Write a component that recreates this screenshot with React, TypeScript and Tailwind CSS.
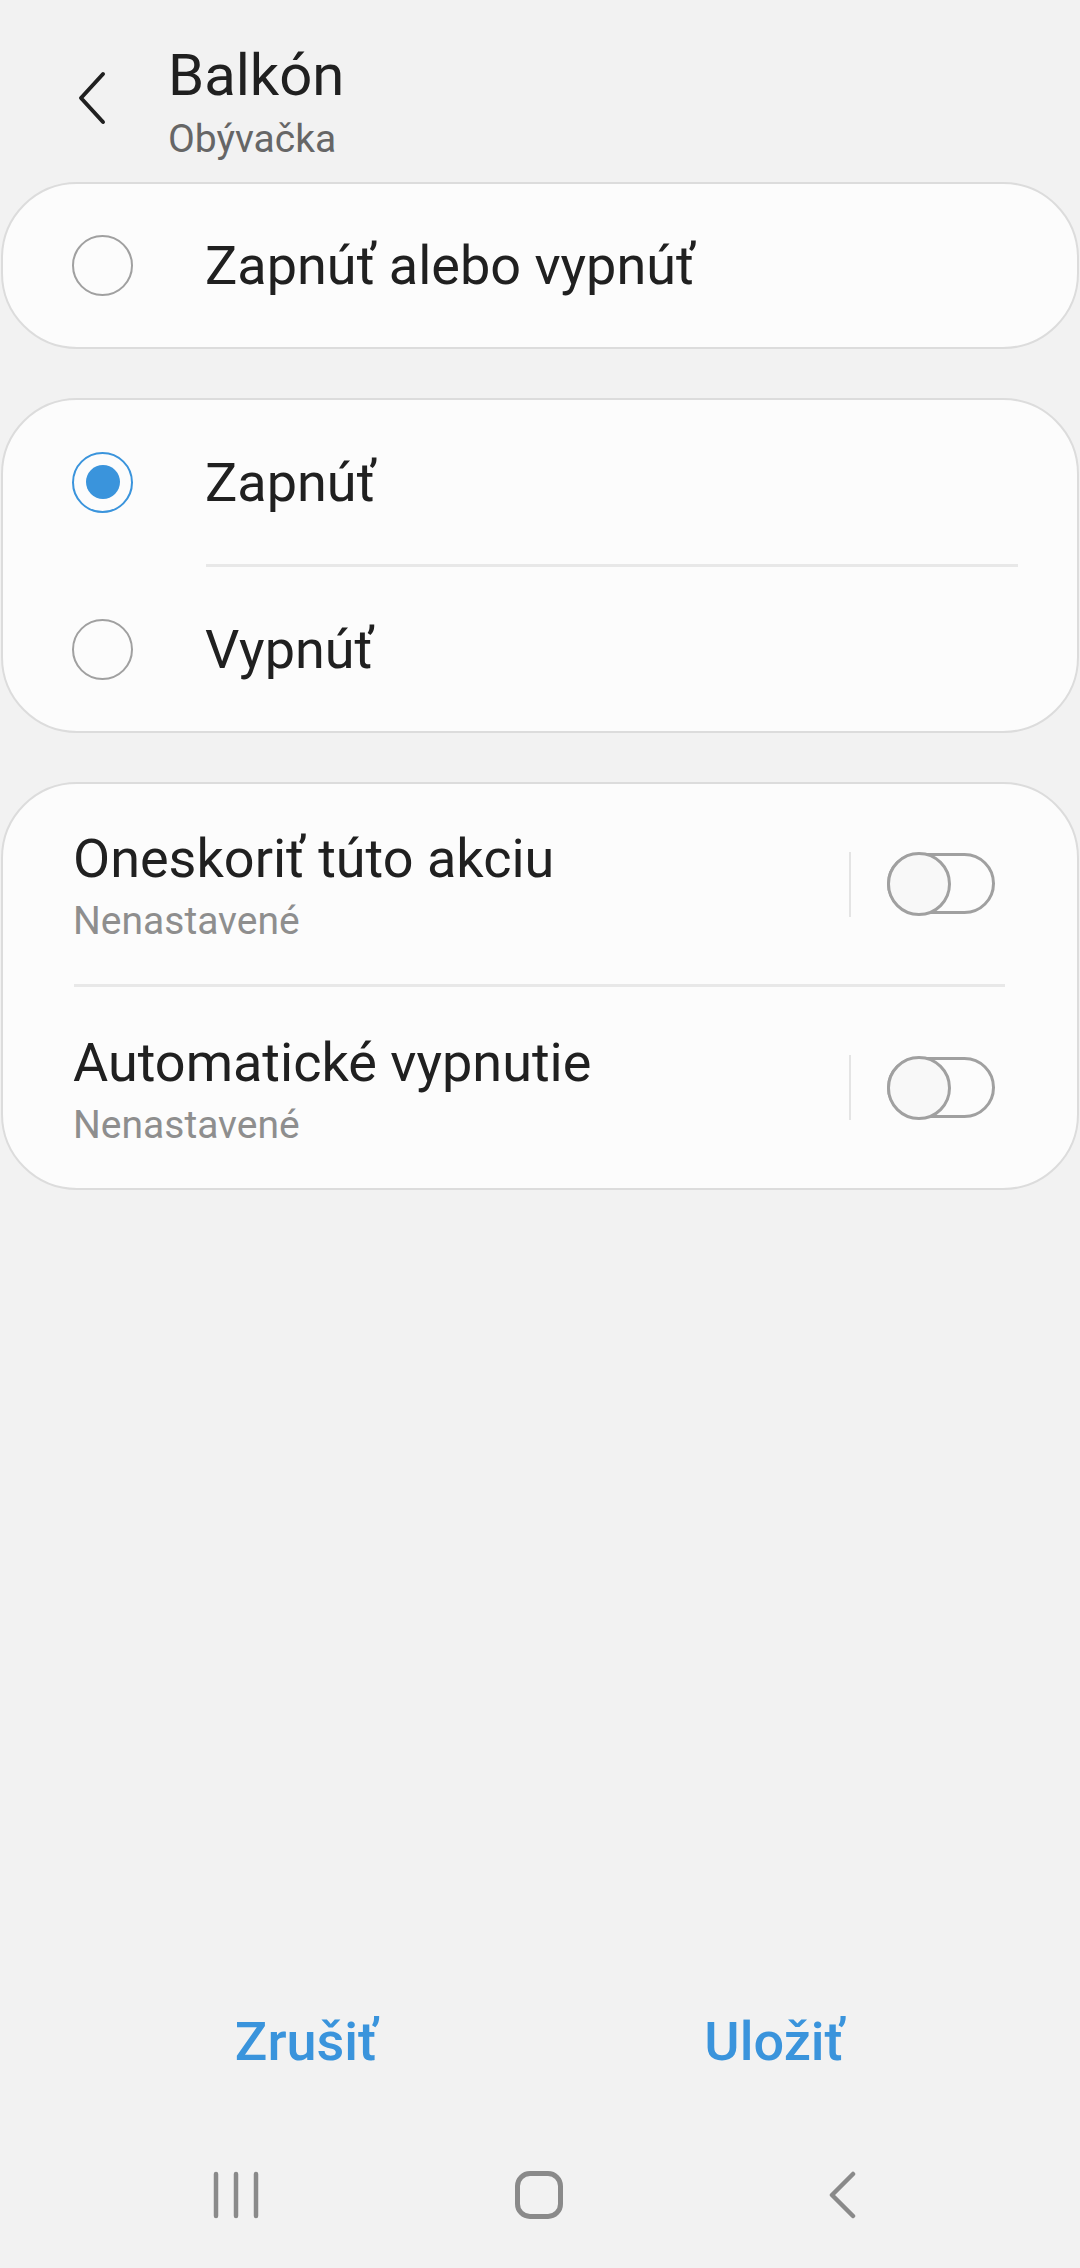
import { useState } from "react";

type Opt = { id: string; label: string };

const groupOpts: Opt[] = [
  { id: "on", label: "Zapnúť" },
  { id: "off", label: "Vypnúť" },
];

export default function App() {
  const [choice, setChoice] = useState("on");
  const [delay, setDelay] = useState(false);
  const [autoOff, setAutoOff] = useState(false);

  return (
    <div className="flex h-[2268px] w-[1080px] flex-col bg-[#f2f2f2] font-['Roboto',sans-serif] text-[#202020]">
      {/* header */}
      <div className="flex h-[182px] items-start">
        <button className="ml-[72px] mt-[68px] flex h-[60px] w-[40px] items-center justify-center">
          <svg width="32" height="56" viewBox="0 0 32 56" fill="none">
            <path d="M27 4 L5 28 L27 52" stroke="#202020" strokeWidth="4" strokeLinecap="round" strokeLinejoin="round" />
          </svg>
        </button>
        <div className="ml-[56px] mt-[40px] flex flex-col">
          <div className="text-[58px] leading-[70px]">Balkón</div>
          <div className="mt-[7px] text-[39px] leading-[44px] text-[#666666]">Obývačka</div>
        </div>
      </div>

      <div className="flex flex-col gap-[49px] px-px">
        <Card>
          <RadioRow label="Zapnúť alebo vypnúť" checked={choice === "both"} onClick={() => setChoice("both")} h="h-[163px]" />
        </Card>

        <Card>
          {groupOpts.map((o, i) => (
            <div key={o.id}>
              {i > 0 && <div className="ml-[203px] mr-[59px] h-[3px] bg-[#e8e8e8]" />}
              <RadioRow label={o.label} checked={choice === o.id} onClick={() => setChoice(o.id)} h="h-[164px]" />
            </div>
          ))}
        </Card>

        <Card>
          <SwitchRow title="Oneskoriť túto akciu" sub="Nenastavené" on={delay} onClick={() => setDelay(!delay)} h="h-[200px]" />
          <div className="ml-[71px] mr-[72px] h-[3px] bg-[#e8e8e8]" />
          <SwitchRow title="Automatické vypnutie" sub="Nenastavené" on={autoOff} onClick={() => setAutoOff(!autoOff)} h="h-[201px]" />
        </Card>
      </div>

      <div className="flex-1" />

      {/* action buttons */}
      <div className="flex h-[64px] px-[72px]">
        <button className="flex-1 text-center text-[54px] leading-[64px] font-medium text-[#3a94dc]">Zrušiť</button>
        <button className="flex-1 text-center text-[54px] leading-[64px] font-medium text-[#3a94dc]">Uložiť</button>
      </div>

      {/* system nav */}
      <div className="flex h-[194px] items-start px-[84px] pt-[97px]">
        <div className="flex w-[303px] justify-center">
          <svg width="48" height="48" viewBox="0 0 48 48">
            <g stroke="#8a8a8a" strokeWidth="4.5" strokeLinecap="round">
              <path d="M4 3 V45" />
              <path d="M24 3 V45" />
              <path d="M44 3 V45" />
            </g>
          </svg>
        </div>
        <div className="flex w-[303px] justify-center">
          <div className="h-[48px] w-[48px] rounded-[15px] border-[5px] border-[#8a8a8a]" />
        </div>
        <div className="flex w-[303px] justify-center">
          <svg width="30" height="48" viewBox="0 0 30 48">
            <path d="M26 3 L5 24 L26 45" stroke="#8a8a8a" strokeWidth="4.5" fill="none" strokeLinecap="round" strokeLinejoin="round" />
          </svg>
        </div>
      </div>
    </div>
  );
}

function Card({ children }: { children: React.ReactNode }) {
  return <section className="rounded-[76px] border-2 border-[#dcdcdc] bg-[#fcfcfc]">{children}</section>;
}

function RadioRow({ label, checked, onClick, h }: { label: string; checked: boolean; onClick: () => void; h: string }) {
  return (
    <button onClick={onClick} className={`flex w-full items-center text-left ${h}`}>
      <span className={`ml-[69px] flex h-[61px] w-[61px] shrink-0 items-center justify-center rounded-full border-2 ${checked ? "border-[#3a94dc]" : "border-[#a0a0a0]"}`}>
        {checked && <span className="h-[34px] w-[34px] rounded-full bg-[#3a94dc]" />}
      </span>
      <span className="ml-[72px] text-[54px] text-[#202020]">{label}</span>
    </button>
  );
}

function SwitchRow({ title, sub, on, onClick, h }: { title: string; sub: string; on: boolean; onClick: () => void; h: string }) {
  return (
    <div className={`flex items-center pl-[70px] pr-[82px] ${h}`}>
      <div className="flex flex-1 flex-col pt-[4px]">
        <div className="text-[54px] leading-[62px] text-[#202020]">{title}</div>
        <div className="mt-[8px] text-[39px] leading-[46px] text-[#8e8e8e]">{sub}</div>
      </div>
      <div className="h-[65px] w-[2px] bg-[#e4e4e4]" />
      <button onClick={onClick} className="relative ml-[36px] h-[64px] w-[108px]">
        <span className={`absolute left-0 right-0 top-[1px] h-[61px] rounded-full border-[3px] ${on ? "border-[#3a94dc] bg-[#3a94dc]" : "border-[#a0a0a0]"}`} />
        <span className={`absolute top-0 h-[64px] w-[64px] rounded-full border-[3px] border-[#a0a0a0] bg-[#f8f8f8] ${on ? "right-0" : "left-0"}`} />
      </button>
    </div>
  );
}
